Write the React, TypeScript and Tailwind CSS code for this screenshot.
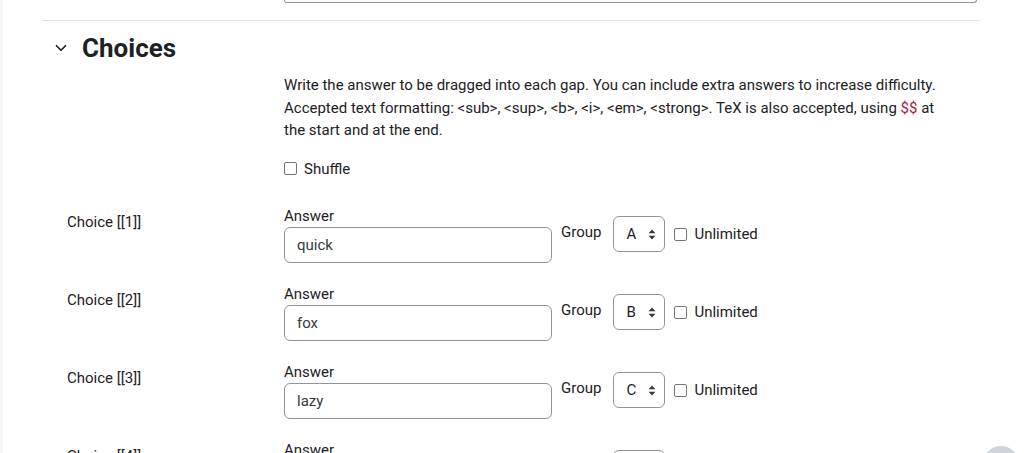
import { ChevronDown } from 'lucide-react';

const choices = [
  { n: 1, answer: 'quick', group: 'A' },
  { n: 2, answer: 'fox', group: 'B' },
  { n: 3, answer: 'lazy', group: 'C' },
  { n: 4, answer: 'dog', group: 'D' },
];

const Checkbox = () => (
  <span className="inline-block w-[13px] h-[13px] border border-[#767676] rounded-[2px] bg-white shrink-0" />
);

const UpDown = () => (
  <svg width="8" height="11" viewBox="0 0 8 11" className="shrink-0">
    <path d="M4 0.5L7.5 4.3H0.5Z" fill="#343a40" />
    <path d="M4 10.5L7.5 6.7H0.5Z" fill="#343a40" />
  </svg>
);

const ChoiceRow = ({ n, answer, group }: { n: number; answer: string; group: string }) => (
  <div className="flex h-[78px] shrink-0">
    <div className="w-[242px] pl-[25px] pt-[6px] leading-[22.5px]">Choice [[{n}]]</div>
    <div className="flex items-start">
      <div className="flex flex-col w-[268px]">
        <div className="leading-[22px]">Answer</div>
        <div className="h-[36px] border border-[#8f959e] rounded-[6px] px-[12px] flex items-center text-[#343a40]">
          {answer}
        </div>
      </div>
      <div className="flex items-start mt-[11px] ml-[9px]">
        <span className="mt-[5px] leading-[22.5px]">Group</span>
        <div className="ml-[12px] h-[36px] w-[52px] border border-[#8f959e] rounded-[6px] flex items-center pl-[12px] gap-[12px]">
          <span>{group}</span>
          <UpDown />
        </div>
        <div className="h-[36px] ml-[9px] flex items-center gap-[7px]">
          <Checkbox />
          <span className="leading-[22.5px]">Unlimited</span>
        </div>
      </div>
    </div>
  </div>
);

export default function App() {
  return (
    <div
      className="relative flex items-start w-full h-[453px] overflow-hidden bg-white text-[15px] text-[#1d2125]"
      style={{ fontFamily: 'Roboto, "Noto Sans", sans-serif' }}
    >
      <div className="w-[3px] h-full bg-[#f5f6f8] shrink-0" />
      <div className="flex flex-col ml-[39px] w-[938px] shrink-0">
        {/* bottom edge of the previous textarea */}
        <div className="shrink-0 ml-[242px] mr-[3px] h-[3px] border border-t-0 border-[#8f959e] rounded-b-[6px]" />
        <div className="shrink-0 mt-[17px] border-t border-[#dee2e6]" />

        <div className="shrink-0 flex items-center h-[52px] mt-[1px]">
          <ChevronDown className="ml-[10px] w-[18px] h-[18px] text-[#1d2125]" strokeWidth={2.25} />
          <h3 className="ml-[12px] text-[26px] font-bold leading-none">Choices</h3>
        </div>

        <div className="shrink-0 ml-[242px] leading-[22.5px]">
          <div>Write the answer to be dragged into each gap. You can include extra answers to increase difficulty.</div>
          <div>
            Accepted text formatting: &lt;sub&gt;, &lt;sup&gt;, &lt;b&gt;, &lt;i&gt;, &lt;em&gt;, &lt;strong&gt;. TeX is also
            accepted, using <span className="text-[#a3213e]">$$</span> at
          </div>
          <div>the start and at the end.</div>
        </div>

        <div className="shrink-0 ml-[242px] mt-[16px] flex items-center gap-[7px] leading-[22.5px]">
          <Checkbox />
          <span>Shuffle</span>
        </div>

        <div className="shrink-0 mt-[25px] flex flex-col">
          {choices.map((c) => (
            <ChoiceRow key={c.n} {...c} />
          ))}
        </div>
      </div>

      {/* floating help button */}
      <div className="absolute left-[983px] top-[446px] w-[36px] h-[36px] rounded-full bg-[#ced4da]" />
    </div>
  );
}
